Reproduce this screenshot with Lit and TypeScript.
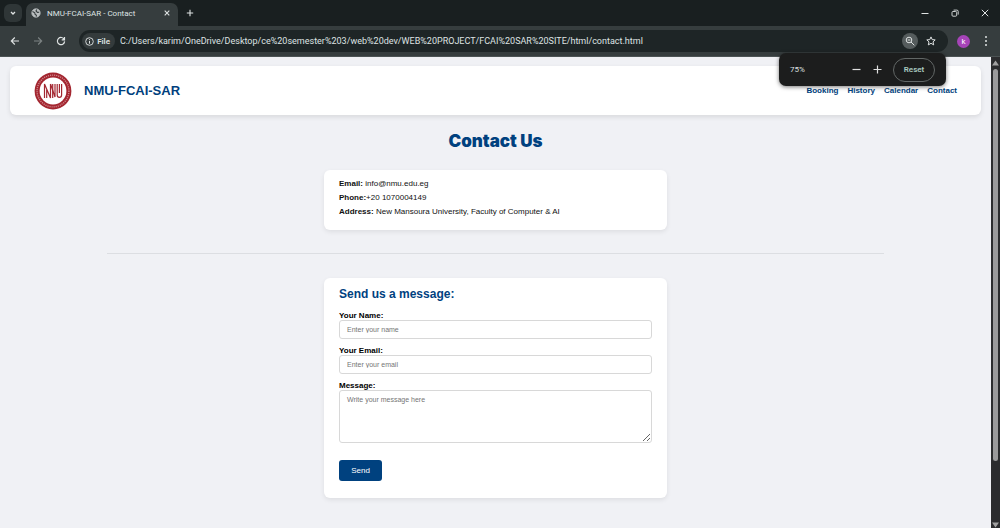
import { LitElement, html, css, svg } from "lit";
import { customElement } from "lit/decorators.js";

@customElement("browser-chrome")
class BrowserChrome extends LitElement {
  static styles = css`
    :host { display: block; color: #dfe3e3; font-family: Roboto, sans-serif; }
    button { border: 0; padding: 0; margin: 0; background: none; color: inherit; font: inherit; display: grid; place-items: center; }
    svg { display: block; fill: none; stroke: currentColor; }
    .tabs { display: flex; height: 26px; background: #191f20; align-items: center; padding-left: 4px; }
    .search { width: 18px; height: 18px; border-radius: 6px; background: #2f3637; }
    .tab { display: flex; align-items: center; align-self: flex-end; box-sizing: border-box; width: 152px; height: 23px; margin-left: 4px; padding: 0 7px 3px 5px; border-radius: 7px 7px 0 0; background: #363d3e; font-size: 8px; }
    .title { flex: 1; margin-left: 6px; white-space: nowrap; }
    .add { width: 24px; }
    .window { display: flex; margin-left: auto; }
    .window button { width: 30px; height: 26px; }
    .bar { display: flex; align-items: center; height: 31px; box-sizing: border-box; background: #363d3e; padding: 0 6px 0 3px; border-bottom: 1px solid #4c5354; }
    .nav { width: 23px; height: 20px; }
    .dim { color: #7c8383; }
    .omni { flex: 1; display: flex; align-items: center; height: 22px; box-sizing: border-box; margin-left: 7px; padding: 0 9px 0 3px; border-radius: 11px; background: #1e2526; }
    .chip { display: flex; align-items: center; justify-content: space-between; box-sizing: border-box; width: 33px; height: 16px; padding: 0 5px 0 3px; border-radius: 8px; background: #343b3c; font-size: 8px; font-weight: 600; }
    .url { flex: 1; min-width: 0; margin-left: 5px; padding: 0; border: 0; background: none; color: inherit; font: 9px/12px Roboto, sans-serif; outline: 0; }
    .mag { width: 16px; height: 16px; border-radius: 50%; background: #555c5d; }
    .star { width: 16px; margin-left: 5px; }
    .avatar { width: 13px; height: 13px; margin-left: 9px; border-radius: 50%; background: #a644b8; color: #fff; font-size: 8px; line-height: 13px; }
    .more { width: 16px; margin-left: 8px; }
  `;
  render() {
    return html`
      <div class="tabs">
        <button class="search" aria-label="Search tabs"><svg width="8" height="8" viewBox="0 0 8 8" stroke-width="1.3"><path d="M2 3l2 2 2-2" /></svg></button>
        <div class="tab">
          <svg width="10" height="10" viewBox="0 0 10 10"><circle cx="5" cy="5" r="4.2" fill="#b9bebf" stroke="#b9bebf" stroke-width=".8" /><path d="M1.5 3.6 3.8 4.8 4 6.3 5.4 7.3 5.2 8.6M5.8 1.4 5 3 6.4 4.4 8.2 4.2" stroke="#363d3e" stroke-width="1.1" /></svg>
          <span class="title">NMU-FCAI-SAR - Contact</span>
          <button aria-label="Close tab"><svg width="8" height="8" viewBox="0 0 8 8" stroke-width="1.1"><path d="m1.7 1.7 4.6 4.6m0-4.6L1.7 6.3" /></svg></button>
        </div>
        <button class="add" aria-label="New tab"><svg width="8" height="8" viewBox="0 0 8 8" stroke-width="1.1"><path d="M4 .8v6.4M.8 4h6.4" /></svg></button>
        <div class="window">
          <button aria-label="Minimize"><svg width="8" height="8" viewBox="0 0 8 8"><path d="M.5 4.5h7" /></svg></button>
          <button aria-label="Restore"><svg width="8" height="8" viewBox="0 0 8 8" stroke-width=".9"><rect x="1" y="2.5" width="4.7" height="4.7" rx="1" /><path d="M2.6 1.1h3.2q1.4 0 1.4 1.4v3.1" /></svg></button>
          <button aria-label="Close"><svg width="8" height="8" viewBox="0 0 8 8"><path d="m.8.8 6.4 6.4m0-6.4L.8 7.2" /></svg></button>
        </div>
      </div>
      <div class="bar">
        <button class="nav" aria-label="Back"><svg width="10" height="10" viewBox="0 0 10 10" stroke-width="1.1"><path d="M9 5H1.5M4.8 1.5 1.3 5l3.5 3.5" /></svg></button>
        <button class="nav dim" aria-label="Forward"><svg width="10" height="10" viewBox="0 0 10 10" stroke-width="1.1"><path d="M1 5h7.5M5.2 1.5 8.7 5 5.2 8.5" /></svg></button>
        <button class="nav" aria-label="Reload"><svg width="10" height="10" viewBox="0 0 10 10" stroke-width="1.2"><path d="M8.2 3.4A3.6 3.6 0 1 0 8.6 5.4M8.5 1v2.8H5.7" /></svg></button>
        <div class="omni">
          <span class="chip"><svg width="9" height="9" viewBox="0 0 9 9"><circle cx="4.5" cy="4.5" r="3.8" stroke-width=".9" /><path d="M4.5 4v2.7M4.5 2.2v1" /></svg>File</span>
          <input class="url" aria-label="Address" value="C:/Users/karim/OneDrive/Desktop/ce%20semester%203/web%20dev/WEB%20PROJECT/FCAI%20SAR%20SITE/html/contact.html" />
          <button class="mag" aria-label="Zoom"><svg width="10" height="10" viewBox="0 0 10 10"><circle cx="4" cy="4" r="2.8" /><path d="m6 6 3.3 3.3M2.7 4h2.6" /></svg></button>
          <button class="star" aria-label="Bookmark"><svg width="10" height="10" viewBox="0 0 10 10" stroke-linejoin="round"><path d="m5 .9 1.2 2.7 3 .3L7 5.9l.7 3L5 7.3 2.3 8.9l.7-3L.8 3.9l3-.3z" /></svg></button>
        </div>
        <button class="avatar" aria-label="Profile">k</button>
        <button class="more" aria-label="Menu"><svg width="4" height="12" viewBox="0 0 4 12" stroke-width="0"><g fill="currentColor"><circle cx="2" cy="2" r="1" /><circle cx="2" cy="6" r="1" /><circle cx="2" cy="10" r="1" /></g></svg></button>
      </div>`;
  }
}

@customElement("zoom-popup")
class ZoomPopup extends LitElement {
  static styles = css`
    :host { display: flex; align-items: center; box-sizing: border-box; width: 167px; height: 33px; padding: 0 11px; border-radius: 7px; background: #1c1d1d; color: #dfe0e0; box-shadow: 0 1px 4px #0008; font: 8px/12px Roboto, sans-serif; }
    button { border: 0; padding: 0; background: none; color: inherit; font: inherit; display: grid; place-items: center; }
    svg { fill: none; stroke: currentColor; stroke-width: 1.2; }
    .value { flex: 1; }
    .step { width: 21px; height: 20px; }
    .reset { box-sizing: border-box; width: 42px; height: 24px; margin-left: 5px; border: 1px solid #626766; border-radius: 12px; color: #a9c9c0; font-weight: 600; }
  `;
  render() {
    return html`<span class="value">75%</span>
      <button class="step" aria-label="Zoom out"><svg width="9" height="9" viewBox="0 0 9 9"><path d="M.5 4.5h8" /></svg></button>
      <button class="step" aria-label="Zoom in"><svg width="9" height="9" viewBox="0 0 9 9"><path d="M.5 4.5h8M4.5.5v8" /></svg></button>
      <button class="reset">Reset</button>`;
  }
}

const seal = svg`
  <circle cx="19" cy="19" r="18.4" fill="#a32630" />
  <circle cx="19" cy="19" r="15.9" fill="none" stroke="#d08a8f" stroke-width="1.4" stroke-dasharray="1.1 1" />
  <circle cx="19" cy="19" r="13.4" fill="#fff" />
  <g fill="none" stroke="#a32630" stroke-width="1.2">
    <path d="M10.5 26V12l6 14V12M12.7 26V17M18.7 12v14" />
    <path d="M16.5 12l4.5 13V12M23.2 12v11q0 2.4 2.2 2.4t2.2-2.4V12M25.4 12v9" />
  </g>`;

@customElement("contact-page")
class ContactPage extends LitElement {
  static styles = css`
    :host { display: block; box-sizing: border-box; padding: 9px 10px 30px; background: #f0f1f5; color: #111; font: 8px/14px "Liberation Sans", Arial, sans-serif; }
    .header { display: flex; align-items: center; height: 49px; padding: 0 24px; border-radius: 6px; background: #fff; box-shadow: 0 2px 5px #0000001a; }
    .brand { margin-left: 12px; color: #003f7d; font-size: 13px; font-weight: 900; }
    .links { display: flex; gap: 9px; margin-left: auto; }
    .links a { color: #003f7d; font-weight: 700; text-decoration: none; }
    h1 { margin: 16px 0 18px; color: #00417f; font: 900 17px/21px Inter, "Liberation Sans", sans-serif; text-align: center; }
    .card { box-sizing: border-box; width: 100%; max-width: 343px; margin: 0 auto; padding: 7px 15px; border-radius: 6px; background: #fff; box-shadow: 0 2px 5px #00000014; }
    .info { padding-bottom: 11px; }
    p { margin: 0; }
    hr { width: 80%; margin: 23px auto 24px; border: 0; border-top: 1px solid #dcdee2; }
    h2 { margin: 0 0 9px; color: #00417f; font-size: 12px; line-height: 18px; }
    .form { padding-bottom: 17px; }
    label { display: block; color: #000; font-weight: 700; line-height: 8px; }
    .field { display: block; box-sizing: border-box; width: 100%; height: 19px; margin: 0 0 8px; padding: 3px 7px; border: 1px solid #d8d8d8; border-radius: 3px; background: #fff; color: #222; font: 7px/11px "Liberation Sans", Arial, sans-serif; outline: 0; }
    .field::placeholder { color: #757575; }
    .area { height: 53px; margin-bottom: 17px; resize: vertical; }
    .send { display: block; width: 43px; height: 21px; padding: 0; border: 0; border-radius: 3px; background: #00417f; color: #fff; font: 8px/12px "Liberation Sans", Arial, sans-serif; }
  `;
  render() {
    return html`
      <header class="header">
        <svg width="38" height="38" viewBox="0 0 38 38" role="img" aria-label="University seal">${seal}</svg>
        <span class="brand">NMU-FCAI-SAR</span>
        <nav class="links"><a href="#">Booking</a><a href="#">History</a><a href="#">Calendar</a><a href="#">Contact</a></nav>
      </header>
      <main>
        <h1>Contact Us</h1>
        <section class="card info">
          <p><b>Email:</b> info@nmu.edu.eg</p>
          <p><b>Phone:</b>+20 1070004149</p>
          <p><b>Address:</b> New Mansoura University, Faculty of Computer &amp; AI</p>
        </section>
        <hr />
        <form class="card form" @submit=${(e: Event) => e.preventDefault()}>
          <h2>Send us a message:</h2>
          <label for="name">Your Name:</label>
          <input class="field" id="name" type="text" placeholder="Enter your name" />
          <label for="email">Your Email:</label>
          <input class="field" id="email" type="email" placeholder="Enter your email" />
          <label for="message">Message:</label>
          <textarea class="field area" id="message" placeholder="Write your message here"></textarea>
          <button class="send">Send</button>
        </form>
      </main>`;
  }
}

@customElement("app-root")
class AppRoot extends LitElement {
  static styles = css`
    :host { display: flex; flex-direction: column; position: relative; height: 100vh; overflow: hidden; }
    .view { flex: 1; min-height: 0; display: flex; background: #f0f1f5; }
    .page { flex: 1; min-width: 0; overflow: hidden; }
    .scroll { display: flex; flex-direction: column; align-items: center; justify-content: space-between; box-sizing: border-box; width: 9px; padding: 3px 0 0; background: #2b2c2e; }
    .scroll svg { display: block; fill: #a0a0a0; }
    .track { flex: 1; padding: 3px 0 61px; }
    .thumb { width: 5px; height: 100%; border-radius: 3px; background: #9a9a9b; }
    .popup { position: absolute; top: 53px; right: 54px; }
  `;
  render() {
    return html`
      <browser-chrome></browser-chrome>
      <div class="view">
        <contact-page class="page"></contact-page>
        <div class="scroll">
          <svg width="7" height="6" viewBox="0 0 7 6"><path d="M3.5.5 7 5.5H0z" /></svg>
          <div class="track"><div class="thumb"></div></div>
          <svg width="7" height="6" viewBox="0 0 7 6"><path d="M0 .5h7l-3.5 5z" /></svg>
        </div>
      </div>
      <zoom-popup class="popup"></zoom-popup>`;
  }
}
